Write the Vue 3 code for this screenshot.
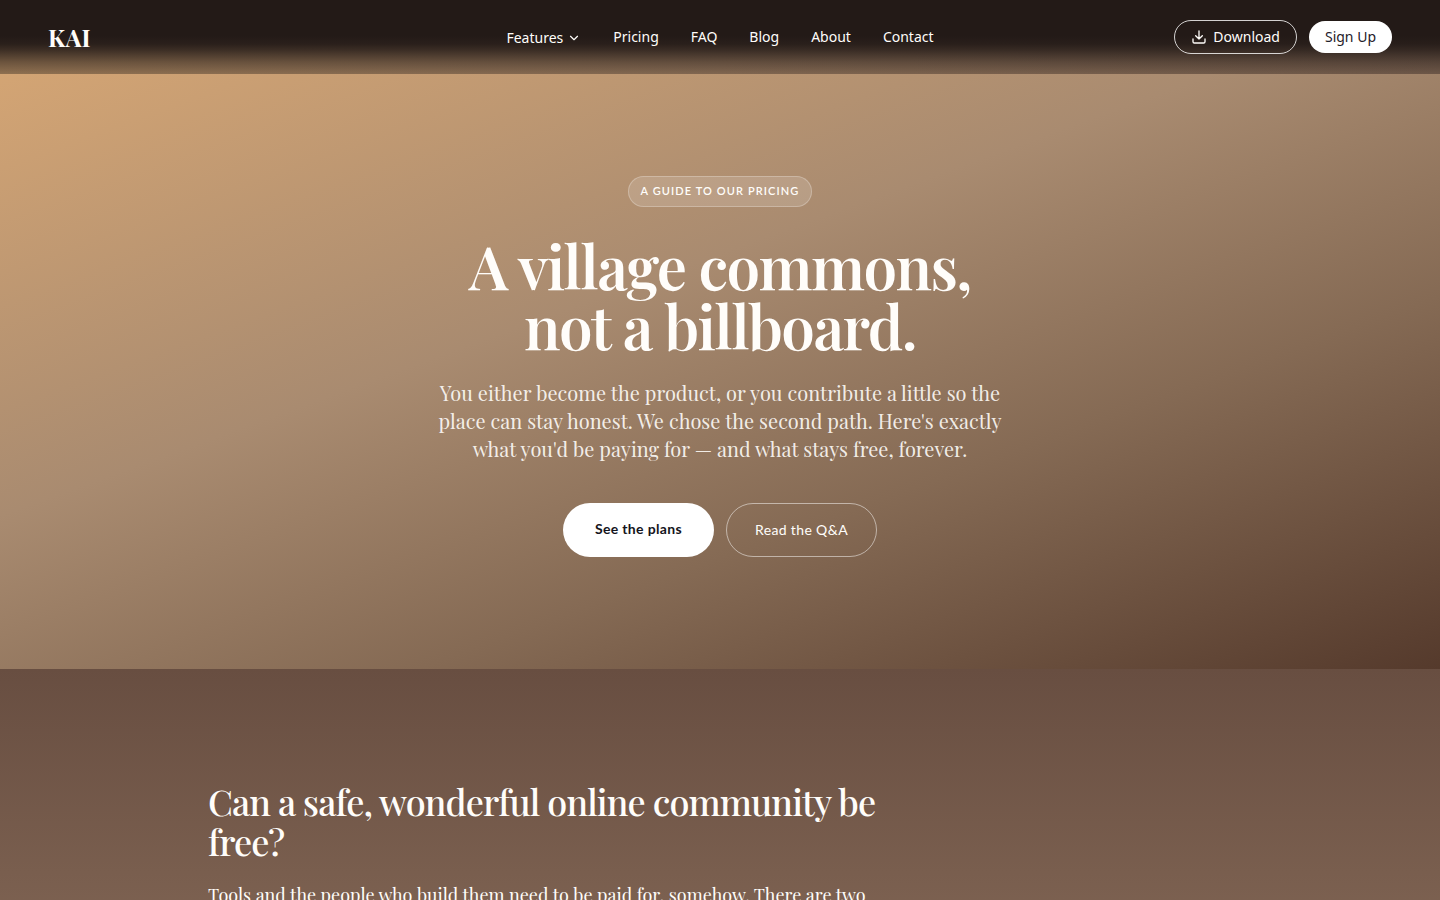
<script setup>
const links = ['Pricing', 'FAQ', 'Blog', 'About', 'Contact']
</script>

<template>
  <div class="page">
    <header class="bar">
      <a class="logo" href="#">KAI</a>
      <nav class="nav" aria-label="Main">
        <button class="features" type="button">
          Features
          <svg width="14" height="14" viewBox="0 0 24 24" aria-hidden="true"><path d="M6 9l6 6 6-6" /></svg>
        </button>
        <a v-for="link in links" :key="link" :href="'#' + link.toLowerCase()">{{ link }}</a>
      </nav>
      <div class="account">
        <a class="download" href="#download">
          <svg width="16" height="16" viewBox="0 0 24 24" aria-hidden="true"><path d="M12 3v12M7 10l5 5 5-5M3 15v4a2 2 0 0 0 2 2h14a2 2 0 0 0 2-2v-4" /></svg>
          Download
        </a>
        <a class="signup" href="#signup">Sign Up</a>
      </div>
    </header>

    <main>
      <section class="hero">
        <span class="tag">A GUIDE TO OUR PRICING</span>
        <h1>A village commons,<br />not a billboard.</h1>
        <p class="lead">
          You either become the product, or you contribute a little so the<br />
          place can stay honest. We chose the second path. Here's exactly<br />
          what you'd be paying for — and what stays free, forever.
        </p>
        <div class="actions">
          <a class="primary" href="#plans">See the plans</a>
          <a class="secondary" href="#qa">Read the Q&amp;A</a>
        </div>
      </section>

      <section class="story">
        <div class="column">
          <h2>Can a safe, wonderful online community be<br />free?</h2>
          <p>Tools and the people who build them need to be paid for, somehow. There are two</p>
        </div>
      </section>
    </main>
  </div>
</template>

<style>
body {
  margin: 0;
  background: #231a17;
}
</style>

<style scoped>
.page {
  height: 100vh;
  overflow: hidden;
  padding-top: 64px;
  box-sizing: border-box;
  color: #fffdfa;
  font-family: "Noto Sans", sans-serif;
  text-rendering: optimizeLegibility;
}
a {
  color: inherit;
  text-decoration: none;
}
svg {
  fill: none;
  stroke: currentColor;
  stroke-width: 2;
  stroke-linecap: round;
  stroke-linejoin: round;
}
.bar {
  position: fixed;
  z-index: 2;
  top: 0;
  left: 0;
  right: 0;
  height: 74px;
  padding: 0 48px;
  box-sizing: border-box;
  display: grid;
  grid-template-columns: 1fr auto 1fr;
  align-items: center;
  background:
    linear-gradient(#231a17 36px, rgba(35, 26, 23, 0.93) 44px, rgba(35, 26, 23, 0.76) 50px, rgba(35, 26, 23, 0.33) 62px, rgba(35, 26, 23, 0) 74px),
    linear-gradient(to right, #8f7050, #806650 50%, #6d5748);
  font-size: 14px;
  line-height: 20px;
}
.logo {
  font-family: "Playfair Display", "Liberation Serif", serif;
  font-size: 24px;
  font-weight: 700;
  line-height: 32px;
  letter-spacing: 0.02em;
}
.nav {
  display: flex;
  align-items: center;
  gap: 32px;
}
.features {
  display: flex;
  align-items: center;
  gap: 4px;
  padding: 2px 0 0;
  border: 0;
  background: none;
  color: inherit;
  font: inherit;
}
.account {
  display: flex;
  align-items: center;
  justify-content: flex-end;
  gap: 12px;
}
.download,
.signup {
  display: flex;
  align-items: center;
  gap: 6px;
  padding: 6px 16px;
  border-radius: 999px;
}
.download {
  border: 1px solid rgba(255, 255, 255, 0.8);
}
.signup {
  background: #fff;
  color: #1f2028;
}
.hero {
  display: flex;
  flex-direction: column;
  align-items: center;
  padding: 112px 24px;
  text-align: center;
  background: linear-gradient(160deg, #d4a574 0%, #a98b70 40%, #856a54 67%, #553a2c 100%);
}
.tag {
  padding: 6px 12px 8px;
  border: 1px solid rgba(255, 255, 255, 0.25);
  border-radius: 999px;
  background: rgba(255, 255, 255, 0.15);
  font-family: Lato, sans-serif;
  font-size: 11px;
  font-weight: 600;
  line-height: 15px;
  letter-spacing: 0.1em;
}
h1,
h2,
p {
  margin: 0;
  font-family: "Playfair Display", "Liberation Serif", serif;
}
h1 {
  margin-top: 28px;
  font-size: 60px;
  font-weight: 600;
  line-height: 60px;
  letter-spacing: -0.025em;
}
.lead {
  margin-top: 24px;
  font-size: 20px;
  line-height: 28px;
  color: rgba(255, 253, 250, 0.9);
}
.actions {
  display: flex;
  gap: 12px;
  margin-top: 40px;
  font-family: Lato, sans-serif;
  font-size: 14px;
  line-height: 20px;
  letter-spacing: 0.025em;
}
.primary,
.secondary {
  border-radius: 999px;
}
.primary {
  padding: 16px 32px 18px;
  background: #fff;
  color: #14141c;
  font-weight: 700;
}
.secondary {
  padding: 16px 28px;
  border: 1px solid rgba(255, 255, 255, 0.5);
}
.story {
  padding: 112px 208px;
  background: linear-gradient(#684e41, #8b6f5c 420px);
}
.column {
  max-width: 720px;
}
h2 {
  font-size: 36px;
  font-weight: 500;
  line-height: 40px;
  letter-spacing: -0.025em;
}
.column p {
  margin-top: 20px;
  font-size: 18px;
  line-height: 28px;
}
</style>
